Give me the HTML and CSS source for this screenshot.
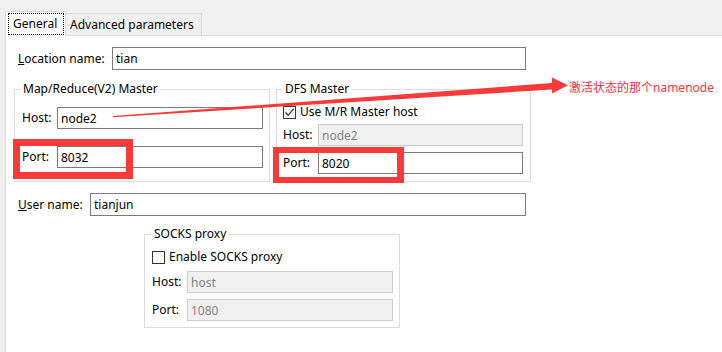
FILE: index.html
```html
<!DOCTYPE html>
<html lang="en">
<head>
    <meta charset="UTF-8">
    <title>Hadoop location</title>
    <link rel="stylesheet" href="styles.css">
</head>
<body>

    <div class="tabs">
        <div class="tab active"><span class="focus">General</span></div>
        <div class="tab">Advanced parameters</div>
    </div>

    <div class="panel">
        <div class="row">
            <label class="name loc"><u>L</u>ocation name:</label>
            <input class="field wide-loc" value="tian">
        </div>

        <div class="masters">
            <fieldset class="group mr">
                <legend>Map/Reduce(V2) Master</legend>
                <div class="line">
                    <label>Host:</label>
                    <input class="field" value="node2">
                </div>
                <div class="line gap-big">
                    <label>Port:</label>
                    <input class="field" value="8032">
                </div>
            </fieldset>

            <fieldset class="group dfs">
                <legend>DFS Master</legend>
                <div class="check">
                    <span class="box">
                        <svg width="11" height="11" viewBox="0 0 11 11"><path d="M1.5 5.5 L4.2 8.3 L9.6 1.8" fill="none" stroke="#333" stroke-width="1.3"/></svg>
                    </span>
                    Use M/R Master host
                </div>
                <div class="line first">
                    <label>Host:</label>
                    <input class="field off" value="node2" disabled>
                </div>
                <div class="line">
                    <label>Port:</label>
                    <input class="field" value="8020">
                </div>
            </fieldset>
        </div>

        <div class="row user">
            <label class="name usr"><u>U</u>ser name:</label>
            <input class="field wide-usr" value="tianjun">
        </div>

        <fieldset class="group socks">
            <legend>SOCKS proxy</legend>
            <div class="check">
                <span class="box"></span>
                Enable SOCKS proxy
            </div>
            <div class="line first">
                <label>Host:</label>
                <input class="field off" value="host" disabled>
            </div>
            <div class="line">
                <label>Port:</label>
                <input class="field off" value="1080" disabled>
            </div>
        </fieldset>
    </div>

    <!-- annotation drawn over the dialog -->
    <svg class="marks" width="722" height="352" viewBox="0 0 722 352">
        <path d="M13 139H133V179H13Z M20 146V172H126V146Z" fill="#f93a3a" fill-rule="evenodd"/>
        <path d="M273 147H404V183H273Z M279 153V177H397V153Z" fill="#f93a3a" fill-rule="evenodd"/>
        <polygon points="113,116 552,83 552,77.5 568,85.3 552,93.5 552,89.5 113,117.2" fill="#f93a3a"/>
    </svg>
    <span class="note">激活状态的那个namenode</span>

</body>
</html>
```

FILE: styles.css
```css
* {
    box-sizing: border-box;
}

body {
    margin: 0;
    width: 722px;
    height: 352px;
    overflow: hidden;
    position: relative;
    background: #f0f0f0;
    font-family: "Noto Sans", sans-serif;
    font-size: 12px;
    line-height: 16px;
    color: #000;
}

/* tab strip */
.tabs {
    display: flex;
    align-items: flex-end;
    height: 35px;
    padding-left: 5px;
}
.tab {
    height: 22px;
    width: 137px;
    margin-left: -1px;
    padding-left: 4px;
    border: 1px solid #d9d9d9;
    border-bottom: none;
    background: #f0f0f0;
    line-height: 21px;
}
.tab.active {
    position: relative;
    width: 61px;
    height: 25px;
    margin-left: 0;
    margin-bottom: -1px;
    padding: 1px 1px 0 2px;
    background: #fff;
}
.focus {
    display: block;
    height: 22px;
    padding-left: 4px;
    border: 1px dotted #000;
    line-height: 20px;
}

/* page body */
.panel {
    height: 317px;
    margin-left: 5px;
    padding: 11px 0 0 8px;
    border-top: 1px solid #d9d9d9;
    border-left: 1px solid #d9d9d9;
    background: #fff;
}
.row {
    display: flex;
    align-items: center;
}
.name {
    margin-left: 4px;
}
.loc { width: 94px; }
.usr { width: 72px; }
.user {
    margin-top: 11px;
}

.field {
    height: 22px;
    margin: 0;
    padding: 0 3px;
    border: 1px solid #7a7a7a;
    border-radius: 0;
    background: #fff;
    font: inherit;
    color: #000;
    outline: none;
}
.row .field { height: 23px; }
.wide-loc { width: 414px; }
.wide-usr { width: 436px; }
.field.off {
    background: #f0f0f0;
    border-color: #cccccc;
    color: #838383;
}

/* group boxes */
.masters {
    display: flex;
    gap: 6px;
    margin-top: 11px;
}
.group {
    margin: 0;
    min-width: 0;
    border: 1px solid #dcdcdc;
}
.group legend {
    padding: 0 2px;
    line-height: 16px;
}
.mr {
    width: 256px;
    padding: 10px 6px 13px 7px;
}
.mr legend { margin-left: -1px; }
.dfs {
    width: 255px;
    padding: 7px 7px 7px 6px;
}
.socks {
    width: 256px;
    margin-top: 10px;
    margin-left: 130px;
    padding: 7px 6px 6px 7px;
}

.line {
    display: flex;
    align-items: center;
    margin-top: 6px;
}
.line label {
    width: 35px;
    flex-shrink: 0;
}
.line .field {
    flex: 1;
    min-width: 0;
}
.mr .line:first-of-type { margin-top: 0; }
.line.gap-big { margin-top: 17px; }
.dfs .line.first { margin-top: 4px; }

.check {
    display: flex;
    align-items: center;
    height: 16px;
}
.box {
    display: flex;
    align-items: center;
    justify-content: center;
    width: 13px;
    height: 13px;
    margin-right: 4px;
    border: 1px solid #333;
    background: #fff;
}

/* red annotation */
.marks {
    position: absolute;
    left: 0;
    top: 0;
    pointer-events: none;
}
.note {
    position: absolute;
    left: 569px;
    top: 80px;
    font-family: "Noto Sans", "Noto Sans CJK SC", sans-serif;
    color: #f8333c;
    white-space: nowrap;
}
```
